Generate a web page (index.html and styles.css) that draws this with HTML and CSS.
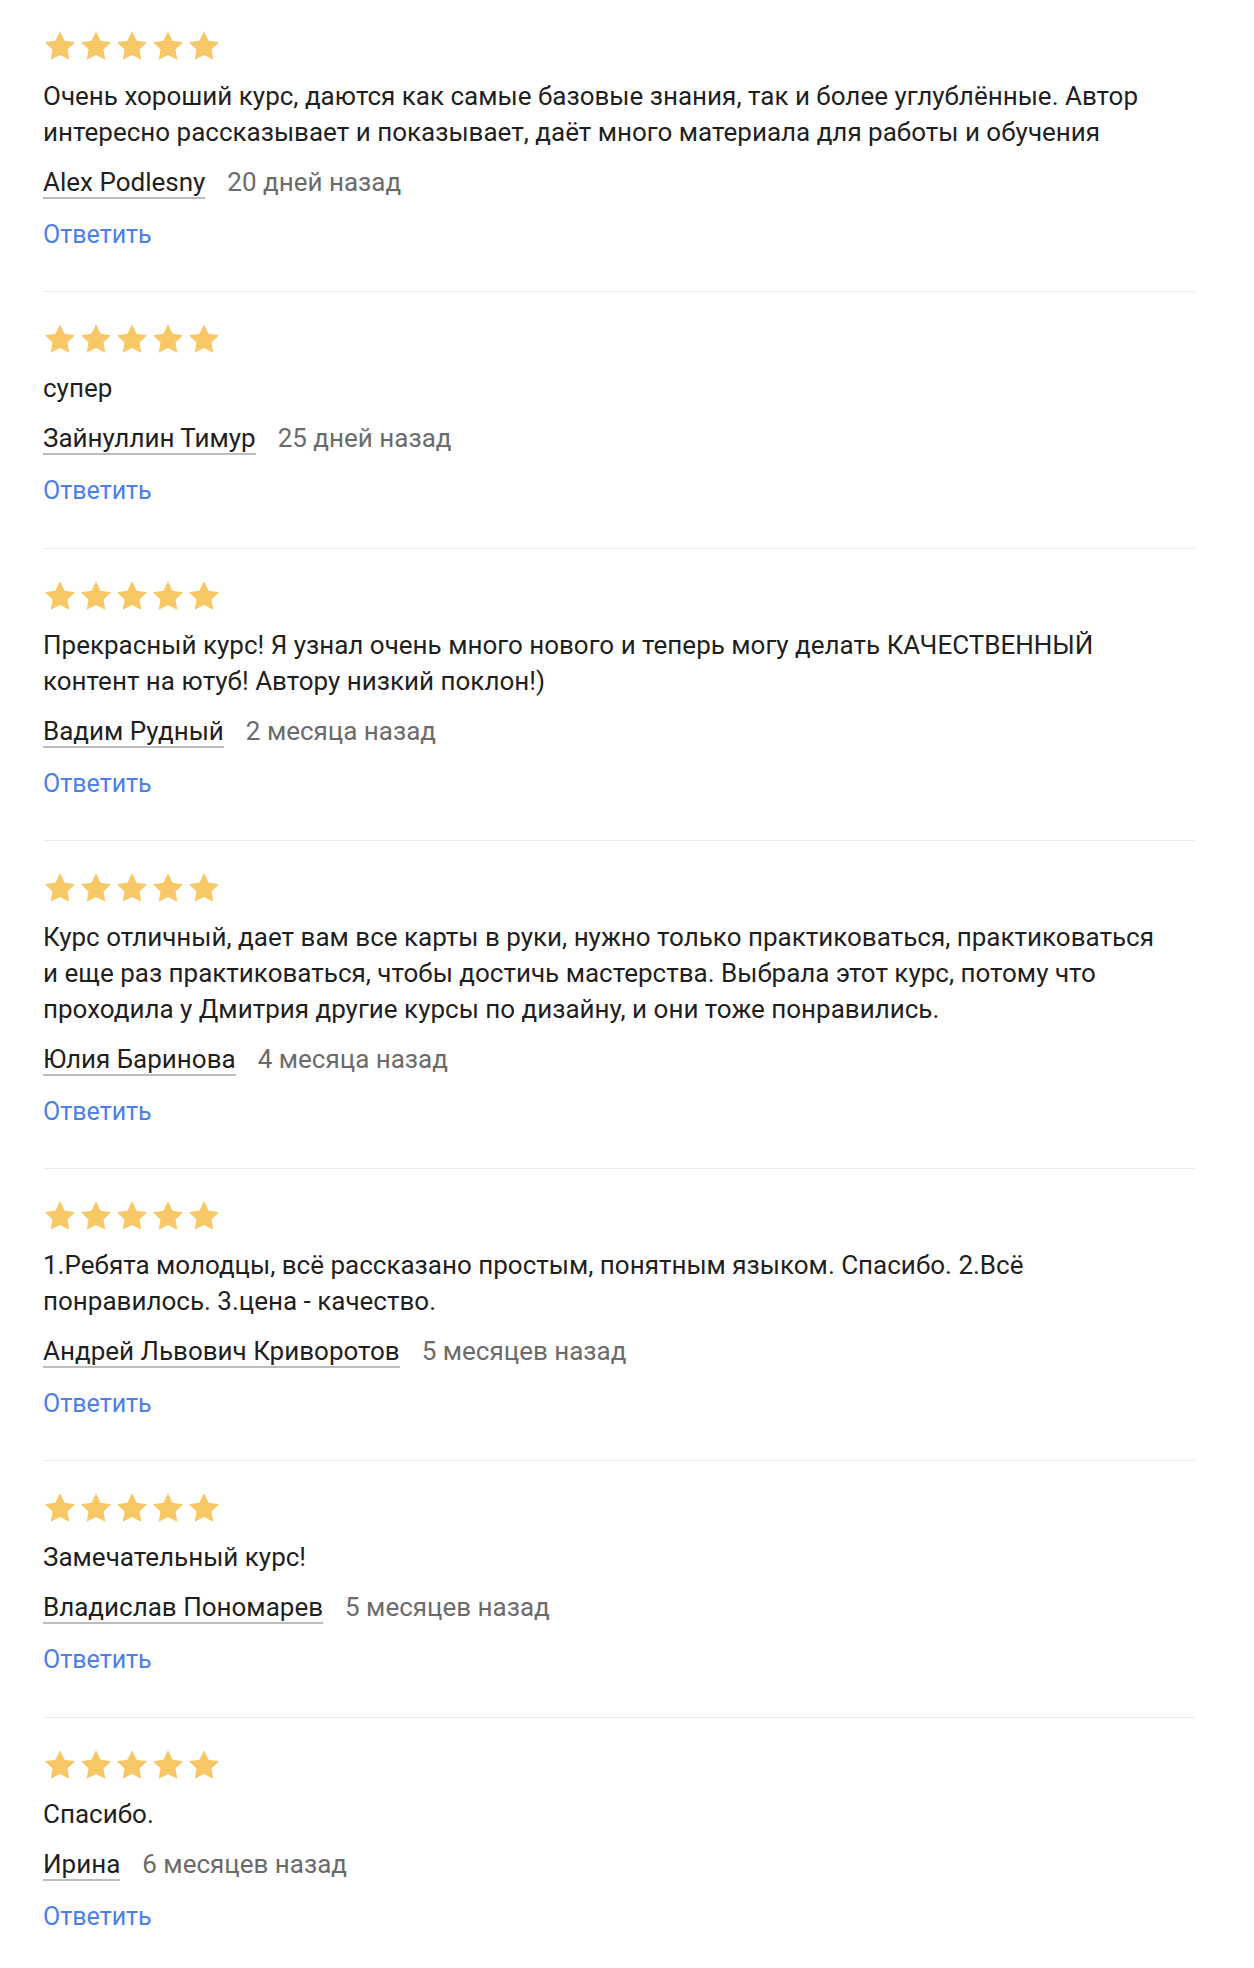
FILE: index.html
```html
<!DOCTYPE html>
<html lang="ru">
<head>
<meta charset="utf-8">
<title>Отзывы</title>
<link rel="stylesheet" href="styles.css">
</head>
<body>
<svg width="0" height="0" class="defs">
  <defs>
    <symbol id="star" viewBox="2 2 20 19.02">
      <path d="M12 2l3.09 6.26L22 9.27l-5 4.87 1.18 6.88L12 17.77l-6.18 3.25L7 14.14 2 9.27l6.91-1.01L12 2z"/>
    </symbol>
  </defs>
</svg>
<main class="reviews">
  <article class="review">
    <div class="stars"><svg class="star"><use href="#star"/></svg><svg class="star"><use href="#star"/></svg><svg class="star"><use href="#star"/></svg><svg class="star"><use href="#star"/></svg><svg class="star"><use href="#star"/></svg></div>
    <p class="text">Очень хороший курс, даются как самые базовые знания, так и более углублённые. Автор интересно рассказывает и показывает, даёт много материала для работы и обучения</p>
    <div class="meta"><span class="author">Alex Podlesny</span><span class="date">20 дней назад</span></div>
    <a class="reply" href="#">Ответить</a>
  </article>
  <article class="review">
    <div class="stars"><svg class="star"><use href="#star"/></svg><svg class="star"><use href="#star"/></svg><svg class="star"><use href="#star"/></svg><svg class="star"><use href="#star"/></svg><svg class="star"><use href="#star"/></svg></div>
    <p class="text">супер</p>
    <div class="meta"><span class="author">Зайнуллин Тимур</span><span class="date">25 дней назад</span></div>
    <a class="reply" href="#">Ответить</a>
  </article>
  <article class="review">
    <div class="stars"><svg class="star"><use href="#star"/></svg><svg class="star"><use href="#star"/></svg><svg class="star"><use href="#star"/></svg><svg class="star"><use href="#star"/></svg><svg class="star"><use href="#star"/></svg></div>
    <p class="text">Прекрасный курс! Я узнал очень много нового и теперь могу делать КАЧЕСТВЕННЫЙ контент на ютуб! Автору низкий поклон!)</p>
    <div class="meta"><span class="author">Вадим Рудный</span><span class="date">2 месяца назад</span></div>
    <a class="reply" href="#">Ответить</a>
  </article>
  <article class="review">
    <div class="stars"><svg class="star"><use href="#star"/></svg><svg class="star"><use href="#star"/></svg><svg class="star"><use href="#star"/></svg><svg class="star"><use href="#star"/></svg><svg class="star"><use href="#star"/></svg></div>
    <p class="text">Курс отличный, дает вам все карты в руки, нужно только практиковаться, практиковаться и еще раз практиковаться, чтобы достичь мастерства. Выбрала этот курс, потому что проходила у Дмитрия другие курсы по дизайну, и они тоже понравились.</p>
    <div class="meta"><span class="author">Юлия Баринова</span><span class="date">4 месяца назад</span></div>
    <a class="reply" href="#">Ответить</a>
  </article>
  <article class="review">
    <div class="stars"><svg class="star"><use href="#star"/></svg><svg class="star"><use href="#star"/></svg><svg class="star"><use href="#star"/></svg><svg class="star"><use href="#star"/></svg><svg class="star"><use href="#star"/></svg></div>
    <p class="text">1.Ребята молодцы, всё рассказано простым, понятным языком. Спасибо. 2.Всё понравилось. 3.цена - качество.</p>
    <div class="meta"><span class="author">Андрей Львович Криворотов</span><span class="date">5 месяцев назад</span></div>
    <a class="reply" href="#">Ответить</a>
  </article>
  <article class="review">
    <div class="stars"><svg class="star"><use href="#star"/></svg><svg class="star"><use href="#star"/></svg><svg class="star"><use href="#star"/></svg><svg class="star"><use href="#star"/></svg><svg class="star"><use href="#star"/></svg></div>
    <p class="text">Замечательный курс!</p>
    <div class="meta"><span class="author">Владислав Пономарев</span><span class="date">5 месяцев назад</span></div>
    <a class="reply" href="#">Ответить</a>
  </article>
  <article class="review">
    <div class="stars"><svg class="star"><use href="#star"/></svg><svg class="star"><use href="#star"/></svg><svg class="star"><use href="#star"/></svg><svg class="star"><use href="#star"/></svg><svg class="star"><use href="#star"/></svg></div>
    <p class="text">Спасибо.</p>
    <div class="meta"><span class="author">Ирина</span><span class="date">6 месяцев назад</span></div>
    <a class="reply" href="#">Ответить</a>
  </article>
</main>
</body>
</html>
```
FILE: styles.css
```css
html, body {
  margin: 0;
  padding: 0;
  background: #ffffff;
}

body {
  font-family: Roboto, "Liberation Sans", sans-serif;
  font-size: 26px;
  line-height: 36px;
  color: #1f1f1f;
}

.defs {
  position: absolute;
  width: 0;
  height: 0;
  overflow: hidden;
}

.reviews {
  width: 1152px;
  padding-left: 43px;
}

.review {
  display: flex;
  flex-direction: column;
  align-items: flex-start;
  padding: 32px 0 38.3px;
  border-bottom: 1px solid #e9e9f1;
}

.review:first-child {
  padding-top: 31px;
}

.review:last-child {
  border-bottom: none;
}

.stars {
  display: flex;
  gap: 6px;
  height: 29px;
  margin-left: 2px;
}

.star {
  width: 30px;
  height: 29px;
  fill: #f8c766;
}

.text {
  margin: 17px 0 0;
  max-width: 1120px;
}

.review:first-child .text {
  margin-top: 18px;
}

.meta {
  margin-top: 14px;
}

.author {
  color: #1f1f1f;
  border-bottom: 2px solid #bdbdbd;
  margin-right: 22px;
}

.date {
  color: #6b6b6b;
}

.reply {
  display: block;
  margin-top: 17px;
  font-size: 25px;
  color: #4a80e8;
  text-decoration: none;
}
```
